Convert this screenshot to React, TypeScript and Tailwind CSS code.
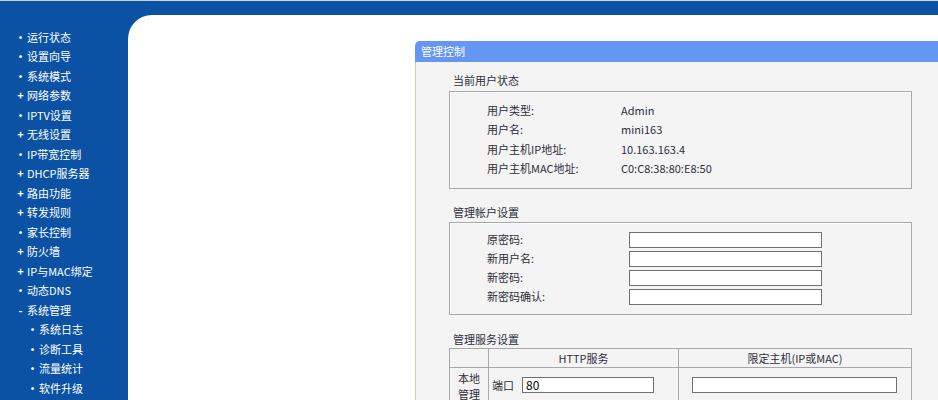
import React from 'react';

type MenuItem = { mark: string; label: string; sub?: boolean };

const MENU: MenuItem[] = [
	{ mark: '•', label: '运行状态' },
	{ mark: '•', label: '设置向导' },
	{ mark: '•', label: '系统模式' },
	{ mark: '+', label: '网络参数' },
	{ mark: '•', label: 'IPTV设置' },
	{ mark: '+', label: '无线设置' },
	{ mark: '•', label: 'IP带宽控制' },
	{ mark: '+', label: 'DHCP服务器' },
	{ mark: '+', label: '路由功能' },
	{ mark: '+', label: '转发规则' },
	{ mark: '•', label: '家长控制' },
	{ mark: '+', label: '防火墙' },
	{ mark: '+', label: 'IP与MAC绑定' },
	{ mark: '•', label: '动态DNS' },
	{ mark: '-', label: '系统管理' },
	{ mark: '•', label: '系统日志', sub: true },
	{ mark: '•', label: '诊断工具', sub: true },
	{ mark: '•', label: '流量统计', sub: true },
	{ mark: '•', label: '软件升级', sub: true },
];

const STATUS = [
	{ label: '用户类型:', value: 'Admin' },
	{ label: '用户名:', value: 'mini163' },
	{ label: '用户主机IP地址:', value: '10.163.163.4' },
	{ label: '用户主机MAC地址:', value: 'C0:C8:38:80:E8:50' },
];

const ACCOUNT = ['原密码:', '新用户名:', '新密码:', '新密码确认:'];

function Sidebar() {
	return (
		<div className="flex w-[128px] shrink-0 flex-col pt-[26px] text-white">
			{MENU.map(({ mark, label, sub }) => (
				<div
					className={`flex h-[19.5px] items-center ${sub ? 'pl-[26px]' : 'pl-[14px]'}`}
					key={label}
				>
					<span className="w-[13px] text-center font-bold">{mark}</span>
					<span>{label}</span>
				</div>
			))}
		</div>
	);
}

function SectionTitle({ children }: { children: React.ReactNode }) {
	return <div className="flex h-[18px] items-center pl-[4px]">{children}</div>;
}

function TextBox({ className, value }: { className: string; value?: string }) {
	return (
		<div
			className={`flex h-[16px] items-center border border-[#707070] bg-white pl-[3px] text-[12px] text-black ${className}`}
		>
			{value}
		</div>
	);
}

function Panel() {
	return (
		<div className="ml-[287px] mt-[26px] w-[540px] shrink-0">
			<div className="flex h-[21px] items-center rounded-tl-[5px] bg-[#6496f2] pl-[6px] text-white">
				管理控制
			</div>

			<div className="h-[360px] border-l border-[#d9c9a4] bg-[#f4f4f4] pl-[33px] pt-[9px] text-[#2e2e3a]">
				{/* current user */}
				<SectionTitle>当前用户状态</SectionTitle>
				<div className="mt-[2px] w-[463px] border border-[#a8a8a8] pb-[10px] pl-[37px] pt-[8px] shadow-[inset_1px_1px_0_#fff]">
					{STATUS.map(({ label, value }) => (
						<div
							className="flex h-[19.5px] items-center"
							key={label}
						>
							<span className="w-[134px]">{label}</span>
							<span>{value}</span>
						</div>
					))}
				</div>

				{/* account */}
				<div className="mt-[14px]">
					<SectionTitle>管理帐户设置</SectionTitle>
				</div>
				<div className="mt-[1px] w-[463px] border border-[#a8a8a8] pb-[8px] pl-[37px] pt-[7px] shadow-[inset_1px_1px_0_#fff]">
					{ACCOUNT.map((label) => (
						<div
							className="flex h-[19px] items-center"
							key={label}
						>
							<span className="w-[142px]">{label}</span>
							<TextBox className="w-[193px]" />
						</div>
					))}
				</div>

				{/* services */}
				<div className="mt-[15px]">
					<SectionTitle>管理服务设置</SectionTitle>
				</div>
				<div className="grid w-[463px] grid-cols-[39px_190px_1fr] border border-[#a8a8a8]">
					<div className="h-[19px] border-r border-b border-[#a8a8a8]" />
					<div className="flex h-[19px] items-center justify-center border-r border-b border-[#a8a8a8]">
						HTTP服务
					</div>
					<div className="flex h-[19px] items-center justify-center border-b border-[#a8a8a8]">
						限定主机(IP或MAC)
					</div>

					<div className="flex flex-col items-center border-r border-[#a8a8a8] pt-[2px] leading-[16px]">
						<span>本地</span>
						<span>管理</span>
					</div>
					<div className="flex h-[40px] items-start gap-[8px] border-r border-[#a8a8a8] pl-[3px] pt-[9px]">
						<span className="leading-[16px]">端口</span>
						<TextBox
							className="w-[132px]"
							value="80"
						/>
					</div>
					<div className="flex items-start pl-[13px] pt-[9px]">
						<TextBox className="w-[205px]" />
					</div>
				</div>
			</div>
		</div>
	);
}

export default function App() {
	return (
		<div className="relative h-[400px] w-[938px] overflow-hidden bg-[#0b52a5] font-['Noto_Sans_CJK_SC',sans-serif] text-[11px]">
			<div className="h-[1px] bg-[#c9d8ea]" />
			<div className="flex h-full">
				<Sidebar />
				<div className="mt-[14px] flex flex-1 rounded-tl-[24px] bg-white">
					<Panel />
				</div>
			</div>
		</div>
	);
}
